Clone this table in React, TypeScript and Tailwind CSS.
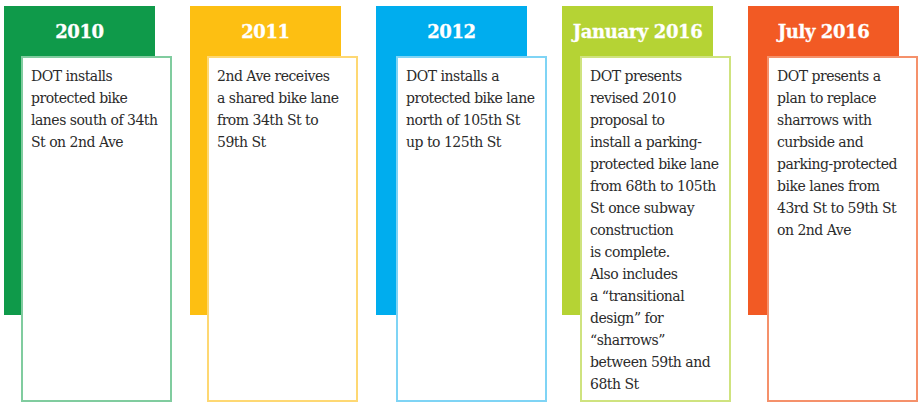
const events = [
  {
    year: "2010",
    block: "bg-[#0f9a4a]",
    border: "border-[#80cc9f]",
    shift: "ml-[17px]",
    lines: ["DOT installs", "protected bike", "lanes south of 34th", "St on 2nd Ave"],
  },
  {
    year: "2011",
    block: "bg-[#fdbf12]",
    border: "border-[#fed873]",
    shift: "ml-[17px]",
    lines: ["2nd Ave receives", "a shared bike lane", "from 34th St to", "59th St"],
  },
  {
    year: "2012",
    block: "bg-[#00adee]",
    border: "border-[#7fd4f5]",
    shift: "ml-[20px]",
    lines: ["DOT installs a", "protected bike lane", "north of 105th St", "up to 125th St"],
  },
  {
    year: "January 2016",
    block: "bg-[#b5d334]",
    border: "border-[#cfe37f]",
    shift: "ml-[18px]",
    lines: [
      "DOT presents",
      "revised 2010",
      "proposal to",
      "install a parking-",
      "protected bike lane",
      "from 68th to 105th",
      "St once subway",
      "construction",
      "is complete.",
      "Also includes",
      "a \u201ctransitional",
      "design\u201d for",
      "\u201csharrows\u201d",
      "between 59th and",
      "68th St",
    ],
  },
  {
    year: "July 2016",
    block: "bg-[#f25a24]",
    border: "border-[#f5916b]",
    shift: "ml-[19px]",
    lines: [
      "DOT presents a",
      "plan to replace",
      "sharrows with",
      "curbside and",
      "parking-protected",
      "bike lanes from",
      "43rd St to 59th St",
      "on 2nd Ave",
    ],
  },
];

export default function App() {
  return (
    <div className="h-[410px] w-[923px] overflow-hidden bg-white pl-[4px] pt-[6px] font-['DejaVu_Serif',serif]">
      <div className="flex gap-[18px]">
        {events.map((ev) => (
          <div key={ev.year} className="flex w-[168px] shrink-0 flex-col">
            <div className={`h-[309px] w-[151px] ${ev.block} pt-[15px] text-center`}>
              <h2 className="text-[18px] leading-[22px] font-bold tracking-[-0.4px] text-white [-webkit-text-stroke:0.3px_white]">
                {ev.year}
              </h2>
            </div>
            <div
              className={`-mt-[259px] h-[346px] w-[151px] ${ev.shift} border-2 ${ev.border} bg-white pt-[7px] pl-[8px]`}
            >
              {ev.lines.map((line) => (
                <p
                  key={line}
                  className="text-[14px] leading-[22px] tracking-[-0.5px] whitespace-nowrap text-[#2b2b2b]"
                >
                  {line}
                </p>
              ))}
            </div>
          </div>
        ))}
      </div>
    </div>
  );
}
